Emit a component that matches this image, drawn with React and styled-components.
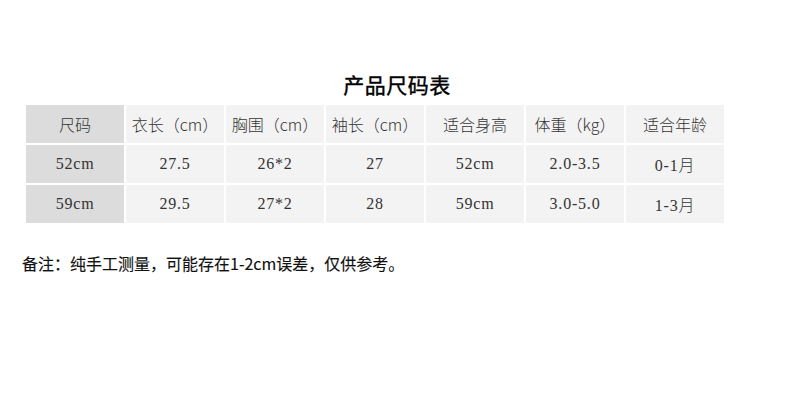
import React from "react";
import styled, { createGlobalStyle } from "styled-components";

const GlobalStyle = createGlobalStyle`
  html, body {
    margin: 0;
    padding: 0;
    background: #ffffff;
  }
  body {
    font-family: "Noto Sans CJK SC", "Liberation Sans", sans-serif;
  }
`;

const header = ["尺码", "衣长（cm）", "胸围（cm）", "袖长（cm）", "适合身高", "体重（kg）", "适合年龄"];

const rows = [
  ["52cm", "27.5", "26*2", "27", "52cm", "2.0-3.5", "0-1月"],
  ["59cm", "29.5", "27*2", "28", "59cm", "3.0-5.0", "1-3月"],
];

export default function App() {
  return (
    <Page>
      <GlobalStyle />
      <Title>产品尺码表</Title>
      <Table>
        {header.map((h, i) => (
          <Cell key={h} $first={i === 0} $head>
            {h}
          </Cell>
        ))}
        {rows.map((r) =>
          r.map((v, i) => (
            <Cell key={r[0] + i} $first={i === 0}>
              {v}
            </Cell>
          ))
        )}
      </Table>
      <Note>备注：纯手工测量，可能存在1-2cm误差，仅供参考。</Note>
    </Page>
  );
}

const Page = styled.div`
  width: 790px;
  height: 410px;
  display: flex;
  flex-direction: column;
  padding-top: 70px;
  box-sizing: border-box;
`;

const Title = styled.h1`
  margin: 0 0 6px 0;
  width: 794px;
  text-align: center;
  font-size: 21px;
  line-height: 29px;
  font-weight: 400;
  color: #000;
  letter-spacing: 0.5px;
  -webkit-text-stroke: 0.4px #000;
`;

const Table = styled.div`
  margin-left: 26px;
  display: grid;
  grid-template-columns: repeat(7, 98px);
  grid-auto-rows: 38px;
  gap: 2px;
`;

const Cell = styled.div`
  display: flex;
  align-items: center;
  justify-content: center;
  background: ${(p) => (p.$first ? "#dcdcdc" : "#f3f3f3")};
  color: #333;
  font-family: ${(p) =>
    p.$head
      ? `"Noto Sans CJK SC", "Liberation Serif", serif`
      : `"Liberation Serif", "Noto Sans CJK SC", serif`};
  font-size: 16px;
  font-weight: 300;
  letter-spacing: ${(p) => (p.$head ? "0" : "0.8px")};
`;

const Note = styled.p`
  margin: 29px 0 0 22px;
  font-size: 16px;
  line-height: 22px;
  font-weight: 400;
  color: #111;
  -webkit-text-stroke: 0.15px #111;
`;
